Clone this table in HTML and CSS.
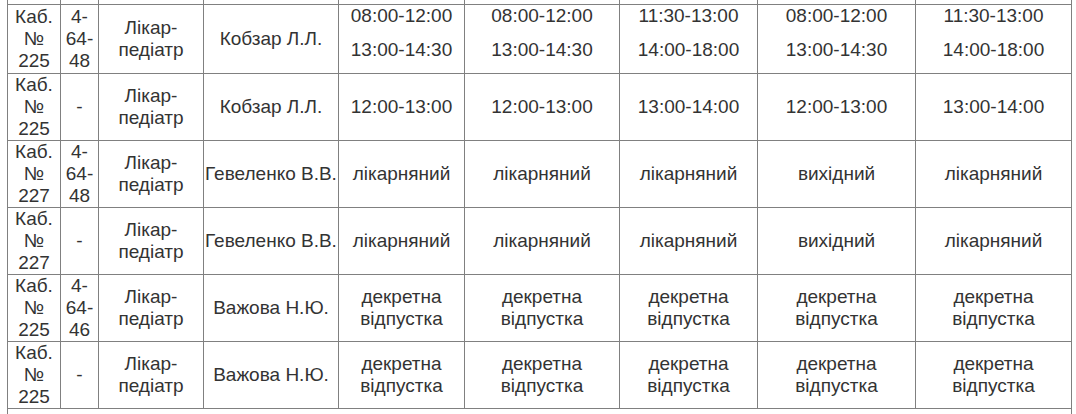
FILE: index.html
```html
<!DOCTYPE html>
<html lang="uk">
<head>
<meta charset="utf-8">
<title>Графік прийому</title>
<link rel="stylesheet" href="styles.css">
</head>
<body>
<div class="page">
<table class="schedule">
<colgroup>
<col class="c-room"><col class="c-phone"><col class="c-pos"><col class="c-name">
<col class="c-d1"><col class="c-d2"><col class="c-d3"><col class="c-d4"><col class="c-d5">
</colgroup>
<tbody>
<tr class="spacer"><td></td><td></td><td></td><td></td><td></td><td></td><td></td><td></td><td></td></tr>
<tr class="first">
<td>Каб. № 225</td><td>4-64-48</td><td>Лікар-педіатр</td><td>Кобзар Л.Л.</td>
<td class="times"><p>08:00-12:00</p><p>13:00-14:30</p></td>
<td class="times"><p>08:00-12:00</p><p>13:00-14:30</p></td>
<td class="times"><p>11:30-13:00</p><p>14:00-18:00</p></td>
<td class="times"><p>08:00-12:00</p><p>13:00-14:30</p></td>
<td class="times"><p>11:30-13:00</p><p>14:00-18:00</p></td>
</tr>
<tr>
<td>Каб. № 225</td><td>-</td><td>Лікар-педіатр</td><td>Кобзар Л.Л.</td>
<td>12:00-13:00</td><td>12:00-13:00</td><td>13:00-14:00</td><td>12:00-13:00</td><td>13:00-14:00</td>
</tr>
<tr>
<td>Каб. № 227</td><td>4-64-48</td><td>Лікар-педіатр</td><td>Гевеленко В.В.</td>
<td>лікарняний</td><td>лікарняний</td><td>лікарняний</td><td>вихідний</td><td>лікарняний</td>
</tr>
<tr>
<td>Каб. № 227</td><td>-</td><td>Лікар-педіатр</td><td>Гевеленко В.В.</td>
<td>лікарняний</td><td>лікарняний</td><td>лікарняний</td><td>вихідний</td><td>лікарняний</td>
</tr>
<tr>
<td>Каб. № 225</td><td>4-64-46</td><td>Лікар-педіатр</td><td>Важова Н.Ю.</td>
<td>декретна відпустка</td><td>декретна відпустка</td><td>декретна відпустка</td><td>декретна відпустка</td><td>декретна відпустка</td>
</tr>
<tr>
<td>Каб. № 225</td><td>-</td><td>Лікар-педіатр</td><td>Важова Н.Ю.</td>
<td>декретна відпустка</td><td>декретна відпустка</td><td>декретна відпустка</td><td>декретна відпустка</td><td>декретна відпустка</td>
</tr>
<tr class="note"><td colspan="9"></td></tr>
</tbody>
</table>
</div>
</body>
</html>
```
FILE: styles.css
```css
html, body {
  margin: 0;
  padding: 0;
  background: #fff;
  overflow: hidden;
}
.page {
  padding-left: 7px;
}
.schedule {
  border-collapse: collapse;
  table-layout: fixed;
  width: 1065px;
  margin-top: -17px;
  font-family: "Liberation Sans", Arial, sans-serif;
  font-size: 19px;
  line-height: 22px;
  color: #333;
}
.c-room { width: 53px; }
.c-phone { width: 38px; }
.c-pos { width: 105px; }
.c-name { width: 135px; }
.c-d1 { width: 126px; }
.c-d2 { width: 155px; }
.c-d3 { width: 138px; }
.c-d4 { width: 158px; }
.c-d5 { width: 156px; }
.schedule td {
  border: 1px solid #808080;
  padding: 0 1px;
  text-align: center;
  vertical-align: middle;
}
.schedule .spacer td {
  height: 20px;
  padding: 0;
}
.schedule td.times p {
  margin: 0 0 12px;
}
.schedule .note td {
  height: 40px;
}
```
